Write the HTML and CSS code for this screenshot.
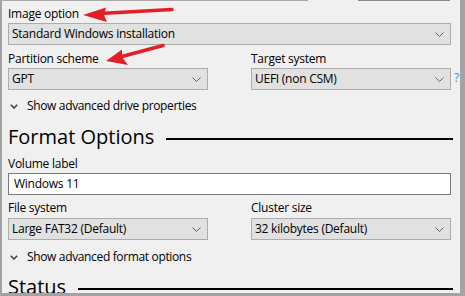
FILE: index.html
```html
<!DOCTYPE html>
<html lang="en">
<head>
<meta charset="utf-8">
<title>Rufus</title>
<link rel="stylesheet" href="styles.css">
</head>
<body>
<div class="window">
  <div class="topline"><span class="seg seg-a"></span><span class="seg seg-b"></span><span class="seg seg-c"></span></div>
  <div class="content">
    <div class="label label-first">Image option</div>
    <div class="select">
      <span class="value">Standard Windows installation</span>
      <svg class="chev" width="9" height="5" viewBox="0 0 9 5"><path d="M0.5 0.5 L4.5 4.5 L8.5 0.5" fill="none" stroke="#606060" stroke-width="1"/></svg>
    </div>

    <div class="pair pair-1">
      <div class="field">
        <div class="label">Partition scheme</div>
        <div class="select">
          <span class="value">GPT</span>
          <svg class="chev" width="9" height="5" viewBox="0 0 9 5"><path d="M0.5 0.5 L4.5 4.5 L8.5 0.5" fill="none" stroke="#606060" stroke-width="1"/></svg>
        </div>
      </div>
      <div class="field">
        <div class="label">Target system</div>
        <div class="select">
          <span class="value">UEFI (non CSM)</span>
          <svg class="chev" width="9" height="5" viewBox="0 0 9 5"><path d="M0.5 0.5 L4.5 4.5 L8.5 0.5" fill="none" stroke="#606060" stroke-width="1"/></svg>
          <span class="help">?</span>
        </div>
      </div>
    </div>

    <div class="toggle toggle-1">
      <svg class="tchev" width="8" height="5" viewBox="0 0 8 5"><path d="M0.8 0.8 L4 4 L7.2 0.8" fill="none" stroke="#3c3c3c" stroke-width="1.5"/></svg>
      <span>Show advanced drive properties</span>
    </div>

    <div class="heading heading-format"><span class="htext">Format Options</span><span class="rule"></span></div>

    <div class="label label-vol">Volume label</div>
    <div class="input">Windows 11</div>

    <div class="pair pair-2">
      <div class="field">
        <div class="label">File system</div>
        <div class="select select-lower">
          <span class="value">Large FAT32 (Default)</span>
          <svg class="chev" width="9" height="5" viewBox="0 0 9 5"><path d="M0.5 0.5 L4.5 4.5 L8.5 0.5" fill="none" stroke="#606060" stroke-width="1"/></svg>
        </div>
      </div>
      <div class="field">
        <div class="label">Cluster size</div>
        <div class="select select-lower">
          <span class="value">32 kilobytes (Default)</span>
          <svg class="chev" width="9" height="5" viewBox="0 0 9 5"><path d="M0.5 0.5 L4.5 4.5 L8.5 0.5" fill="none" stroke="#606060" stroke-width="1"/></svg>
        </div>
      </div>
    </div>

    <div class="toggle toggle-2">
      <svg class="tchev" width="8" height="5" viewBox="0 0 8 5"><path d="M0.8 0.8 L4 4 L7.2 0.8" fill="none" stroke="#3c3c3c" stroke-width="1.5"/></svg>
      <span>Show advanced format options</span>
    </div>

    <div class="heading heading-status"><span class="htext">Status</span><span class="rule"></span></div>
  </div>

  <svg class="arrows" width="465" height="296" viewBox="0 0 465 296">
    <line x1="100" y1="13.5" x2="172" y2="9.5" stroke="#e41e26" stroke-width="3.5" stroke-linecap="round"/>
    <polygon points="83,15 106,7.5 104,15 107,22" fill="#e41e26"/>
    <line x1="120" y1="57" x2="163" y2="45.5" stroke="#e41e26" stroke-width="3.5" stroke-linecap="round"/>
    <polygon points="106,61 122,49.5 122,57 128,65" fill="#e41e26"/>
  </svg>
</div>
</body>
</html>
```

FILE: styles.css
```css
html, body {
  margin: 0;
  padding: 0;
}

body {
  width: 465px;
  height: 296px;
  overflow: hidden;
  background: #f0f0f0;
  font-family: "Open Sans", "Noto Sans", sans-serif;
  font-size: 12px;
  color: #000;
}

.window {
  position: relative;
  box-sizing: border-box;
  width: 465px;
  height: 296px;
  border-left: 2px solid #a3a3a3;
  border-right: 5px solid #a3a3a3;
  border-bottom: 3px solid #a3a3a3;
  overflow: hidden;
}

.topline {
  display: flex;
  height: 1px;
}

.seg {
  display: block;
  height: 1px;
}

.seg-a {
  width: 306px;
  background: #a8a8a8;
}

.seg-b {
  width: 50px;
  background: #f0f0f0;
}

.seg-c {
  width: 92px;
  background: #8a8a8a;
}

.content {
  padding: 0 9px 0 6px;
}

.label {
  line-height: 16px;
  height: 16px;
  white-space: nowrap;
  letter-spacing: -0.25px;
}

.label-first {
  margin-top: 5px;
  margin-bottom: 1px;
}

.select {
  position: relative;
  box-sizing: border-box;
  height: 22px;
  display: flex;
  align-items: center;
  justify-content: space-between;
  background: #e1e1e1;
  border: 1px solid #adadad;
  padding: 0 6px 0 3px;
  letter-spacing: -0.25px;
}

.value {
  white-space: nowrap;
  line-height: 16px;
}

.chev {
  display: block;
  margin-top: 1px;
}

.help {
  position: absolute;
  left: calc(100% + 4px);
  top: 1px;
  color: #3d8fe0;
  font-size: 12px;
  line-height: 16px;
}

.pair {
  display: grid;
  grid-template-columns: 200px 200px;
  column-gap: 43px;
}

.pair-1 {
  margin-top: 6px;
}

.pair-1 .label {
  margin-bottom: 1px;
}

.toggle {
  display: flex;
  align-items: center;
  height: 16px;
  line-height: 16px;
  padding-left: 2px;
  letter-spacing: -0.35px;
}

.tchev {
  display: block;
  margin-right: 9px;
  margin-top: 1px;
}

.toggle-1 {
  margin-top: 8px;
}

.heading {
  display: flex;
  align-items: center;
  height: 26px;
}

.htext {
  font-size: 20px;
  font-weight: 500;
  line-height: 26px;
  white-space: nowrap;
  letter-spacing: 0;
}

.rule {
  flex: 1;
  height: 2px;
  background: #000;
  margin: 3px -2px 0 12px;
}

.heading-format {
  margin-top: 10px;
}

.label-vol {
  margin-top: 6px;
  margin-bottom: 1px;
}

.input {
  box-sizing: border-box;
  height: 22px;
  background: #fff;
  border: 1px solid #7a7a7a;
  padding: 0 5px;
  line-height: 20px;
  letter-spacing: -0.25px;
}

.pair-2 {
  margin-top: 5px;
}

.pair-2 .label {
  margin-bottom: 2px;
}

.toggle-2 {
  margin-top: 9px;
}

.heading-status {
  margin-top: 9px;
}

.arrows {
  position: absolute;
  left: -2px;
  top: 0;
  pointer-events: none;
}
```
